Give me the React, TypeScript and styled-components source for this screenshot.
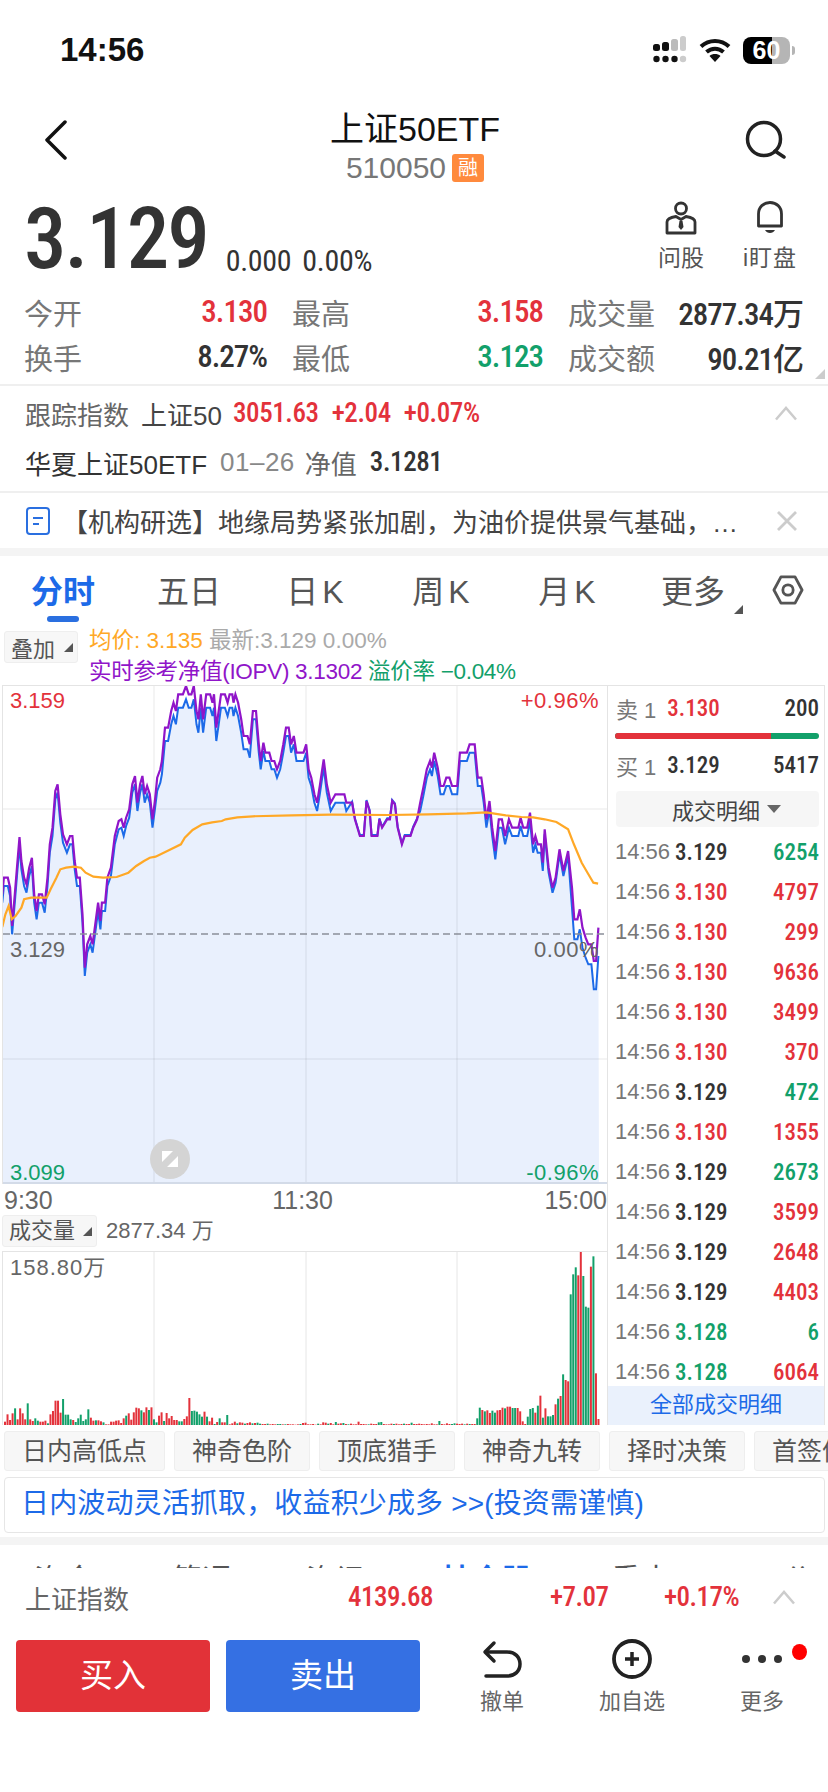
import React from "react";
import styled, { createGlobalStyle } from "styled-components";

const RED = "#e3323b";
const GREEN = "#12a06a";
const BLUE = "#1c6ae8";
const SANS = `"Liberation Sans", "Noto Sans CJK SC", sans-serif`;
const NARROW = `Roboto, "Noto Sans CJK SC", sans-serif`;

const GlobalStyle = createGlobalStyle`
    html, body {
        margin: 0;
        padding: 0;
        background: #fff;
    }
    body {
        font-family: ${SANS};
        color: #333;
    }
`;

const Page = styled.div`
    width: 828px;
    height: 1792px;
    overflow: hidden;
    position: relative;
    background: #fff;
`;

/* status bar */
const StatusBar = styled.div`
    height: 100px;
    display: flex;
    align-items: center;
    justify-content: space-between;
    padding: 0 38px 0 60px;
`;

const Clock = styled.span`
    font-size: 33px;
    font-weight: 700;
    color: #111;
`;

const StatusIcons = styled.div`
    display: flex;
    align-items: center;
    gap: 12px;
`;

const Battery = styled.div`
    width: 47px;
    height: 27px;
    border-radius: 8px;
    background: linear-gradient(90deg, #000 0 62%, #b5b5b5 62% 100%);
    color: #fff;
    font-size: 25px;
    font-weight: 700;
    line-height: 27px;
    text-align: center;
    position: relative;
    &::after {
        content: "";
        position: absolute;
        right: -5px;
        top: 9px;
        width: 3px;
        height: 9px;
        border-radius: 0 3px 3px 0;
        background: #b5b5b5;
    }
`;

/* nav */
const Nav = styled.div`
    height: 90px;
    display: grid;
    grid-template-columns: 1fr auto 1fr;
    padding: 0 42px 0 44px;
`;

const NavCenter = styled.div`
    display: flex;
    flex-direction: column;
    align-items: center;
`;

const Title = styled.div`
    font-size: 34px;
    line-height: 40px;
    margin-top: 9px;
    color: #111;
`;

const Code = styled.div`
    display: flex;
    align-items: center;
    gap: 6px;
    font-size: 30px;
    line-height: 34px;
    color: #777;
    margin-top: 2px;
`;

const Tag = styled.span`
    width: 32px;
    height: 28px;
    border-radius: 3px;
    background: #ff8a3d;
    color: #fff;
    font-size: 20px;
    line-height: 28px;
    text-align: center;
`;

const NavIcon = styled.svg<{ $end?: boolean }>`
    margin-top: 20px;
    justify-self: ${(p) => (p.$end ? "end" : "start")};
`;

/* quote */
const QuoteRow = styled.div`
    height: 97px;
    display: flex;
    justify-content: space-between;
    padding: 0 27px 0 24px;
`;

const QuoteMain = styled.div`
    display: flex;
    align-items: flex-end;
    height: 92px;
`;

const Price = styled.span`
    font-family: ${NARROW};
    font-stretch: 75%;
    font-size: 85px;
    font-weight: 500;
    line-height: 86px;
    letter-spacing: -2px;
    color: #333;
`;

const Change = styled.span`
    font-family: ${NARROW};
    font-stretch: 75%;
    font-size: 30px;
    line-height: 36px;
    letter-spacing: -0.3px;
    color: #333;
    margin: 0 0 3px 18px;
    & + & {
        margin-left: 11px;
    }
`;

const QuoteTools = styled.div`
    display: flex;
    gap: 27px;
    padding-top: 11px;
`;

const QuoteTool = styled.div<{ $spaced?: boolean }>`
    width: 62px;
    display: flex;
    flex-direction: column;
    align-items: center;
    gap: 9px;
    font-size: 23px;
    line-height: 28px;
    letter-spacing: ${(p) => (p.$spaced ? "1px" : "0")};
    color: #555;
    white-space: nowrap;
`;

const StatGrid = styled.div`
    display: grid;
    grid-template-columns: 243px 251px 235px;
    grid-auto-rows: 45px;
    column-gap: 25px;
    padding: 2px 22px 5px 24px;
    border-bottom: 2px solid #efefef;
    position: relative;
    &::after {
        content: "";
        position: absolute;
        right: 3px;
        bottom: 5px;
        border-style: solid;
        border-width: 0 0 10px 10px;
        border-color: transparent transparent #ccc transparent;
    }
`;

const Stat = styled.div`
    display: flex;
    justify-content: space-between;
    align-items: center;
`;

const StatLabel = styled.span`
    font-size: 29px;
    color: #777;
`;

const StatValue = styled.span<{ $color?: string }>`
    font-family: ${NARROW};
    font-stretch: 75%;
    font-size: 31px;
    font-weight: 500;
    letter-spacing: -1px;
    color: ${(p) => p.$color || "#333"};
    white-space: nowrap;
`;

/* tracked index */
const Tracking = styled.div`
    height: 107px;
    padding: 0 30px 0 25px;
    border-bottom: 2px solid #efefef;
    box-sizing: border-box;
    display: grid;
    grid-template-rows: 54px 44px;
    align-items: center;
`;

const TrackLine = styled.div`
    display: flex;
    align-items: center;
    font-size: 26px;
`;

const Muted = styled.span<{ $gap?: number; $color?: string }>`
    color: ${(p) => p.$color || "#666"};
    margin-right: ${(p) => p.$gap ?? 0}px;
    white-space: nowrap;
`;

const TrackDate = styled(Muted)`
    letter-spacing: 0.5px;
`;

const TrackNum = styled.span<{ $gap?: number; $color?: string }>`
    font-family: ${NARROW};
    font-stretch: 75%;
    font-size: 27px;
    font-weight: 500;
    letter-spacing: -0.4px;
    color: ${(p) => p.$color || "#333"};
    margin-right: ${(p) => p.$gap ?? 0}px;
`;

const Chevron = styled.svg`
    margin-left: auto;
`;

const IndexChevron = styled.svg`
    justify-self: start;
`;

const News = styled.div`
    height: 55px;
    display: flex;
    align-items: center;
    padding: 0 30px 0 26px;
`;

const NewsText = styled.div`
    flex: 1;
    margin: 0 30px 0 12px;
    font-size: 26px;
    color: #444;
    white-space: nowrap;
    overflow: hidden;
    text-overflow: ellipsis;
`;

const Band = styled.div`
    height: 8px;
    background: #f4f4f4;
`;

/* chart tabs */
const Tabs = styled.div`
    height: 66px;
    display: grid;
    grid-template-columns: repeat(6, 126px) 1fr;
    align-items: start;
`;

const Tab = styled.div<{ $active?: boolean; $wide?: boolean }>`
    position: relative;
    text-align: center;
    font-size: 32px;
    line-height: 44px;
    padding-top: 14px;
    padding-left: ${(p) => (p.$wide ? "4px" : "0")};
    white-space: nowrap;
    letter-spacing: ${(p) => (p.$wide ? "4px" : "0")};
    font-weight: ${(p) => (p.$active ? 700 : 400)};
    color: ${(p) => (p.$active ? BLUE : "#555")};
    ${(p) =>
        p.$active &&
        `&::after {
            content: "";
            position: absolute;
            left: 47px;
            top: 60px;
            width: 32px;
            height: 6px;
            border-radius: 3px;
            background: #2a6fe0;
        }`}
`;

const MoreTab = styled(Tab)`
    padding-left: 18px;
`;

const Corner = styled.i`
    display: inline-block;
    vertical-align: bottom;
    border-style: solid;
    border-width: 0 0 9px 9px;
    border-color: transparent transparent #555 transparent;
`;

const TabIcon = styled.div`
    display: flex;
    justify-content: center;
    padding: 19px 8px 0 0;
`;

const LegendRow = styled.div`
    height: 63px;
    display: flex;
    padding-left: 4px;
    box-sizing: border-box;
    padding-top: 9px;
`;

const SmallButton = styled.div<{ $width: number }>`
    width: ${(p) => p.$width}px;
    height: 32px;
    box-sizing: border-box;
    display: flex;
    align-items: center;
    justify-content: space-between;
    padding: 0 4px 0 6px;
    background: #f7f7f7;
    border: 1px solid #eee;
    border-radius: 3px;
    font-size: 22px;
    color: #555;
`;

const LegendText = styled.div`
    margin: -6px 0 0 11px;
    font-size: 22.5px;
    line-height: 31px;
    white-space: nowrap;
`;

const LegendTight = styled.div`
    letter-spacing: -0.3px;
`;

const LegendPart = styled.span<{ $color: string }>`
    color: ${(p) => p.$color};
`;

/* chart body */
const ChartArea = styled.div`
    display: flex;
    height: 740px;
    padding-left: 2px;
`;

const ChartColumn = styled.div`
    width: 605px;
    display: flex;
    flex-direction: column;
`;

const Plot = styled.div<{ $height: number }>`
    position: relative;
    height: ${(p) => p.$height}px;
    border-top: 1px solid #e4e4e4;
    border-left: 1px solid #e4e4e4;
    box-sizing: border-box;
    flex: none;
    svg {
        display: block;
    }
`;

const PlotLabel = styled.span<{ $top: number; $color: string; $right?: boolean }>`
    position: absolute;
    top: ${(p) => p.$top}px;
    ${(p) => (p.$right ? "right: 8px; letter-spacing: 0.5px;" : "left: 7px;")}
    font-size: 22px;
    line-height: 26px;
    color: ${(p) => p.$color};
`;

const VolumeMax = styled(PlotLabel)`
    letter-spacing: 1px;
`;

const TimeAxis = styled.div`
    height: 31px;
    display: flex;
    justify-content: space-between;
    padding: 0 0 0 2px;
    font-size: 25px;
    line-height: 32px;
    color: #666;
    span:nth-child(2) {
        margin-left: 8px;
    }
`;

const VolumeHeader = styled.div`
    height: 36px;
    display: flex;
    gap: 9px;
    font-size: 22px;
    line-height: 32px;
    color: #666;
`;

const SidePanel = styled.div`
    width: 218px;
    height: 740px;
    box-sizing: border-box;
    border: 1px solid #e4e4e4;
    border-bottom: none;
    display: flex;
    flex-direction: column;
    overflow: hidden;
`;

const BookRow = styled.div<{ $height: number }>`
    height: ${(p) => p.$height}px;
    flex: none;
    display: flex;
    align-items: center;
    padding: 0 5px 0 8px;
    font-size: 22px;
    color: #777;
`;

const BookPrice = styled.span<{ $color: string }>`
    font-family: ${NARROW};
    font-stretch: 75%;
    font-size: 23px;
    font-weight: 500;
    margin-left: 11px;
    color: ${(p) => p.$color};
`;

const BookVolume = styled.span`
    margin-left: auto;
    font-family: ${NARROW};
    font-stretch: 75%;
    font-size: 23px;
    font-weight: 500;
    color: #333;
`;

const DepthBar = styled.div`
    flex: none;
    height: 6px;
    margin: 3px 5px 0 7px;
    border-radius: 3px;
    overflow: hidden;
    display: flex;
    background: ${GREEN};
`;

const DepthFill = styled.div`
    height: 100%;
    background: ${RED};
`;

const DetailButton = styled.div`
    flex: none;
    height: 36px;
    margin: 0 5px 0 8px;
    padding-left: 18px;
    border-radius: 4px;
    background: #f6f6f6;
    display: flex;
    align-items: center;
    justify-content: center;
    gap: 7px;
    font-size: 22px;
    color: #444;
`;

const TradeList = styled.div`
    flex: 1;
    min-height: 0;
    overflow: hidden;
    margin-top: 5px;
`;

const TradeRow = styled.div`
    height: 40px;
    display: flex;
    align-items: center;
    padding: 0 5px 0 7px;
    font-size: 22px;
    color: #777;
`;

const TradePrice = styled.span<{ $color: string }>`
    font-family: ${NARROW};
    font-stretch: 75%;
    font-size: 23px;
    font-weight: 500;
    margin-left: 5px;
    color: ${(p) => p.$color};
`;

const TradeVolume = styled.span<{ $color: string }>`
    margin-left: auto;
    font-family: ${NARROW};
    font-stretch: 75%;
    font-size: 23px;
    font-weight: 500;
    color: ${(p) => p.$color};
`;

const AllTrades = styled.div`
    flex: none;
    height: 39px;
    background: #eaf1fc;
    color: ${BLUE};
    font-size: 22px;
    line-height: 38px;
    text-align: center;
`;

/* strategy chips */
const ChipRow = styled.div`
    display: flex;
    gap: 9px;
    padding: 6px 0 0 4px;
    overflow: hidden;
`;

const Chip = styled.div`
    flex: none;
    box-sizing: border-box;
    height: 40px;
    padding: 0 17px;
    background: #f7f7f7;
    border: 1px solid #eee;
    border-radius: 3px;
    font-size: 25px;
    line-height: 38px;
    color: #555;
    white-space: nowrap;
`;

const Banner = styled.div`
    box-sizing: border-box;
    height: 56px;
    margin: 6px 3px 4px 4px;
    padding-left: 16px;
    border: 1px solid #e6e6e6;
    border-radius: 4px;
    font-size: 28px;
    letter-spacing: 0.15px;
    line-height: 52px;
    color: ${BLUE};
    white-space: nowrap;
`;

const PeekTabs = styled.div`
    height: 23px;
    overflow: hidden;
    display: grid;
    grid-template-columns: 138px 134px 136px 169px 172px 1fr;
    padding-left: 34px;
    box-sizing: border-box;
    font-size: 30px;
    line-height: 70px;
    color: #555;
`;

const PeekTab = styled.span<{ $active?: boolean }>`
    color: ${(p) => (p.$active ? BLUE : "#555")};
    font-weight: ${(p) => (p.$active ? 700 : 400)};
`;

/* footer */
const IndexBar = styled.div`
    height: 72px;
    box-sizing: border-box;
    padding: 0 0 14px 25px;
    display: grid;
    grid-template-columns: 323px 202px 114px 108px 1fr;
    align-items: center;
    font-family: ${NARROW};
    font-stretch: 75%;
    font-size: 27px;
    font-weight: 500;
    letter-spacing: -0.5px;
    color: ${RED};
`;

const IndexName = styled.span`
    font-family: ${SANS};
    font-size: 26px;
    font-weight: 400;
    letter-spacing: 0;
    color: #666;
`;

const ActionBar = styled.div`
    display: flex;
    padding-left: 16px;
`;

const TradeButton = styled.div<{ $color: string }>`
    width: 194px;
    height: 72px;
    margin-right: 16px;
    border-radius: 4px;
    background: ${(p) => p.$color};
    color: #fff;
    font-size: 33px;
    line-height: 72px;
    text-align: center;
`;

const ActionIcons = styled.div`
    display: grid;
    grid-template-columns: repeat(3, 130px);
    margin-left: 1px;
`;

const ActionItem = styled.div`
    position: relative;
    display: flex;
    flex-direction: column;
    align-items: center;
    font-size: 22px;
    line-height: 28px;
    color: #666;
    gap: 10px;
`;

const Dot = styled.span`
    position: absolute;
    left: 95px;
    top: 4px;
    width: 15px;
    height: 16px;
    border-radius: 50%;
    background: #f00;
`;

// traced from the intraday line, x/y in a 2.57x / 3x grid
const IOPV_RAW = [
    6,640, 10,590, 20,590, 26,620, 31,735, 38,640, 45,540, 50,468, 55,540, 62,590, 68,610, 75,560, 82,530, 88,640,
    94,690, 100,640, 108,640, 115,670, 122,590, 128,490, 135,440, 142,330, 148,310, 155,400, 162,460, 172,490,
    180,465, 186,465, 192,540, 198,590, 205,590, 212,700, 218,860, 224,790, 232,765, 238,790, 246,720, 252,665,
    258,720, 262,665, 270,665, 276,590, 285,560, 295,465, 305,420, 312,415, 318,440, 324,410, 332,385, 340,310,
    347,285, 353,365, 360,310, 366,285, 372,340, 378,315, 385,340, 392,415, 398,360, 404,290, 412,265, 416,240,
    424,140, 432,140, 440,90, 446,65, 452,90, 458,40, 470,40, 478,15, 485,40, 492,40, 498,15, 505,90, 510,115,
    516,40, 522,115, 530,40, 540,40, 546,65, 550,40, 556,140, 562,90, 568,40, 578,40, 585,65, 590,40, 597,40,
    600,65, 605,40, 612,65, 620,115, 626,165, 636,165, 642,190, 650,90, 658,90, 665,190, 670,240, 677,185, 682,215,
    692,215, 698,240, 705,240, 712,265, 720,240, 728,190, 735,140, 742,140, 748,190, 755,165, 762,215, 780,215,
    787,190, 793,265, 800,290, 808,340, 815,365, 822,315, 832,235, 840,310, 850,365, 862,340, 885,340, 890,365,
    905,365, 912,415, 925,465, 935,465, 942,360, 950,390, 955,465, 970,465, 975,415, 982,440, 995,415, 1002,415,
    1008,360, 1015,370, 1022,440, 1033,490, 1040,465, 1055,465, 1062,440, 1072,415, 1080,365, 1088,320, 1097,265,
    1105,240, 1110,260, 1116,215, 1125,260, 1132,315, 1140,315, 1147,290, 1155,290, 1162,315, 1175,315, 1182,215,
    1200,215, 1207,190, 1220,190, 1228,290, 1237,290, 1243,340, 1250,415, 1258,360, 1265,440, 1273,510, 1282,415,
    1290,415, 1298,465, 1308,415, 1316,440, 1332,440, 1338,410, 1345,440, 1355,440, 1362,395, 1370,490, 1376,465,
    1382,490, 1390,490, 1395,545, 1400,445, 1410,560, 1420,620, 1428,590, 1438,505, 1448,570, 1460,510, 1470,620,
    1476,715, 1484,715, 1490,685, 1497,740, 1505,770, 1512,790, 1520,790, 1526,840, 1532,840, 1538,740,
];

const AVG_RAW = [
    6,738, 14,700, 22,675, 30,715, 40,705, 55,680, 62,655, 80,650, 100,650, 120,650, 130,625, 145,590, 155,565,
    170,560, 190,557, 208,560, 220,575, 240,587, 265,590, 300,588, 330,575, 350,555, 370,540, 385,530, 400,527,
    430,510, 465,490, 475,470, 495,447, 520,430, 545,424, 570,420, 580,415, 610,409, 650,406, 750,403, 850,401,
    1000,402, 1100,400, 1200,397, 1250,394, 1300,403, 1340,408, 1370,409, 1400,415, 1430,423, 1460,445, 1475,490,
    1495,545, 1510,575, 1525,605, 1537,608,
];

const toPoints = (raw: number[], shift: (x: number) => number = () => 0) => {
    const out: string[] = [];
    for (let i = 0; i < raw.length; i += 2) {
        const x = raw[i] / 2.57 - 3;
        const y = (raw[i + 1] + shift(raw[i])) / 3 - 5;
        out.push(`${x.toFixed(1)},${y.toFixed(1)}`);
    }
    return out.join(" ");
};

// the price line sits a little under the IOPV line
const priceGap = (x: number) => {
    if (x < 400) return 25;
    if (x < 650) return 40;
    if (x < 905) return 25;
    if (x < 1075) return -3;
    if (x < 1400) return 25;
    if (x < 1470) return 15;
    if (x < 1526) return 60;
    return 85;
};

const pricePoints = toPoints(IOPV_RAW, priceGap);

// negative = green bar, values are 3x real height
const VOLUME = [
    10,32,15,35,-50,17,50,35,17,-65,17,12,-20,-13,10,10,13,-5,32,42,73,73,37,-78,-31,-31,-17,15,-9,-20,-31,-12,-17,-47,22,13,
    -14,14,11,-8,2,2,10,10,13,14,6,20,-28,35,16,38,52,50,-44,38,53,-45,53,-17,-8,28,38,-12,36,20,27,15,15,-11,-11,18,26,81,
    -42,-43,-40,-32,-25,40,-25,11,22,-3,9,-20,8,8,-30,2,5,10,-5,8,
    7,-4,6,8,-5,6,-7,-4,3,3,-4,2,3,2,-3,-3,2,-2,3,2,2,1,2,-3,6,7,2,2,3,1,-4,2,
    8,7,-4,6,2,-9,4,5,-6,3,-2,4,2,2,10,3,3,2,-2,4,3,3,-8,-9,3,2,2,4,-3,4,2,3,-4,3,3,-7,3,3,4,3,2,3,2,5,2,2,-12,3,2,5,
    3,-3,-5,4,3,4,-2,4,
    -3,3,3,-20,-52,45,-41,44,36,-43,-37,44,45,52,-50,55,55,-51,-51,51,41,11,3,-25,-48,-51,37,-58,88,-22,50,-26,-26,-30,62,
    -79,87,-152,135,131,-392,-452,-473,449,521,-447,-355,-352,475,-506,155,18,
];

const BAR_STEP = 596 / VOLUME.length;

const GRID_X = [151, 303, 454];

const trades: [string, string][] = [
    ["3.129", "6254"],
    ["3.130", "4797"],
    ["3.130", "299"],
    ["3.130", "9636"],
    ["3.130", "3499"],
    ["3.130", "370"],
    ["3.129", "472"],
    ["3.130", "1355"],
    ["3.129", "2673"],
    ["3.129", "3599"],
    ["3.129", "2648"],
    ["3.129", "4403"],
    ["3.128", "6"],
    ["3.128", "6064"],
];

const tradeColors: Record<number, string> = {
    0: GREEN,
    6: GREEN,
    8: GREEN,
    12: GREEN,
};

const priceColor = (price: string) => {
    if (price === "3.129") return "#333";
    return price === "3.130" ? RED : GREEN;
};

const chips = ["日内高低点", "神奇色阶", "顶底猎手", "神奇九转", "择时决策", "首签信号"];

function SignalIcon() {
    return (
        <svg width="34" height="28" viewBox="0 0 34 28">
            <rect x="0" y="8" width="7" height="7" rx="2.5" fill="#111" />
            <rect x="9" y="6" width="7" height="9" rx="2.5" fill="#111" />
            <rect x="18" y="3" width="7" height="12" rx="2.5" fill="#bbb" />
            <rect x="27" y="0" width="6" height="15" rx="2.5" fill="#ccc" />
            <circle cx="3.5" cy="23" r="3.2" fill="#111" />
            <circle cx="12.5" cy="23" r="3.2" fill="#111" />
            <circle cx="21.5" cy="23" r="3.2" fill="#111" />
            <circle cx="30" cy="23" r="3.2" fill="#ccc" />
        </svg>
    );
}

function WifiIcon() {
    return (
        <svg width="32" height="24" viewBox="0 0 32 24" fill="none" stroke="#111" strokeWidth="4">
            <path d="M2 8.5C10 1 22 1 30 8.5" />
            <path d="M7.5 14C12.5 9.5 19.5 9.5 24.5 14" />
            <path d="M16 24l-5.5-6c3-2.6 8-2.6 11 0z" fill="#111" stroke="none" />
        </svg>
    );
}

const chevronPath = "M2 14.5L12 3L22 14.5";

function App() {
    return (
        <Page>
            <GlobalStyle />
            <StatusBar>
                <Clock>14:56</Clock>
                <StatusIcons>
                    <SignalIcon />
                    <WifiIcon />
                    <Battery>60</Battery>
                </StatusIcons>
            </StatusBar>

            <Nav>
                <NavIcon width="24" height="40" viewBox="0 0 24 40" fill="none" stroke="#111" strokeWidth="3.5">
                    <path d="M21 2L3 20L21 38" strokeLinecap="round" strokeLinejoin="round" />
                </NavIcon>
                <NavCenter>
                    <Title>上证50ETF</Title>
                    <Code>
                        510050
                        <Tag>融</Tag>
                    </Code>
                </NavCenter>
                <NavIcon $end width="42" height="40" viewBox="0 0 42 40" fill="none" stroke="#222" strokeWidth="3.5">
                    <circle cx="20" cy="19" r="16.5" />
                    <path d="M31 31l9 6" strokeLinecap="round" />
                </NavIcon>
            </Nav>

            <QuoteRow>
                <QuoteMain>
                    <Price>3.129</Price>
                    <Change>0.000</Change>
                    <Change>0.00%</Change>
                </QuoteMain>
                <QuoteTools>
                    <QuoteTool>
                        <svg width="32" height="34" viewBox="0 0 32 34" fill="none" stroke="#333" strokeWidth="2.8">
                            <circle cx="16" cy="7.5" r="5.5" />
                            <path d="M2 32V21c0-3 3-4.5 9-5.5l5 3 5-3c6 1 9 2.5 9 5.5v11z" strokeLinejoin="round" />
                            <path d="M14.5 20h3l1 6-2.5 3-2.5-3z" fill="#333" stroke="none" />
                        </svg>
                        问股
                    </QuoteTool>
                    <QuoteTool $spaced>
                        <svg width="28" height="34" viewBox="0 0 28 34" fill="none" stroke="#333" strokeWidth="2.8">
                            <path d="M2.5 25V13C2.5 6 7.5 1.5 14 1.5S25.5 6 25.5 13v12z" strokeLinejoin="round" />
                            <path d="M9 29h10c-1 2-3 3-5 3s-4-1-5-3z" fill="#333" stroke="none" />
                        </svg>
                        i盯盘
                    </QuoteTool>
                </QuoteTools>
            </QuoteRow>

            <StatGrid>
                <Stat>
                    <StatLabel>今开</StatLabel>
                    <StatValue $color={RED}>3.130</StatValue>
                </Stat>
                <Stat>
                    <StatLabel>最高</StatLabel>
                    <StatValue $color={RED}>3.158</StatValue>
                </Stat>
                <Stat>
                    <StatLabel>成交量</StatLabel>
                    <StatValue>2877.34万</StatValue>
                </Stat>
                <Stat>
                    <StatLabel>换手</StatLabel>
                    <StatValue>8.27%</StatValue>
                </Stat>
                <Stat>
                    <StatLabel>最低</StatLabel>
                    <StatValue $color={GREEN}>3.123</StatValue>
                </Stat>
                <Stat>
                    <StatLabel>成交额</StatLabel>
                    <StatValue>90.21亿</StatValue>
                </Stat>
            </StatGrid>

            <Tracking>
                <TrackLine>
                    <Muted $gap={12}>跟踪指数</Muted>
                    <Muted $gap={11} $color="#444">
                        上证50
                    </Muted>
                    <TrackNum $gap={13} $color={RED}>
                        3051.63
                    </TrackNum>
                    <TrackNum $gap={13} $color={RED}>
                        +2.04
                    </TrackNum>
                    <TrackNum $color={RED}>+0.07%</TrackNum>
                    <Chevron width="24" height="16" viewBox="0 0 24 16" fill="none" stroke="#ccc" strokeWidth="2.5">
                        <path d={chevronPath} />
                    </Chevron>
                </TrackLine>
                <TrackLine>
                    <Muted $gap={13} $color="#333">
                        华夏上证50ETF
                    </Muted>
                    <TrackDate $gap={10} $color="#888">
                        01–26
                    </TrackDate>
                    <Muted $gap={13}>净值</Muted>
                    <TrackNum>3.1281</TrackNum>
                </TrackLine>
            </Tracking>

            <News>
                <svg width="24" height="28" viewBox="0 0 24 28" fill="none" stroke="#2a6fe0" strokeWidth="2">
                    <rect x="1" y="1" width="22" height="26" rx="3" />
                    <path d="M7 11h10M7 17h6" />
                </svg>
                <NewsText>【机构研选】地缘局势紧张加剧，为油价提供景气基础，…</NewsText>
                <svg width="22" height="22" viewBox="0 0 22 22" fill="none" stroke="#ccc" strokeWidth="2.8">
                    <path d="M2 2l18 18M20 2L2 20" />
                </svg>
            </News>
            <Band />

            <Tabs>
                <Tab $active>分时</Tab>
                <Tab>五日</Tab>
                <Tab $wide>日K</Tab>
                <Tab $wide>周K</Tab>
                <Tab $wide>月K</Tab>
                <MoreTab>
                    更多 <Corner />
                </MoreTab>
                <TabIcon>
                    <svg width="34" height="30" viewBox="0 0 34 32" fill="none" stroke="#555" strokeWidth="3">
                        <path d="M9.5 2h15L32 16l-7.5 14h-15L2 16z" strokeLinejoin="round" />
                        <circle cx="17" cy="16" r="5.5" />
                    </svg>
                </TabIcon>
            </Tabs>

            <LegendRow>
                <SmallButton $width={74}>
                    叠加
                    <Corner />
                </SmallButton>
                <LegendText>
                    <div>
                        <LegendPart $color="#ffa826">均价: 3.135 </LegendPart>
                        <LegendPart $color="#aaa">最新:3.129 0.00%</LegendPart>
                    </div>
                    <LegendTight>
                        <LegendPart $color="#9015c9">实时参考净值(IOPV) 3.1302 </LegendPart>
                        <LegendPart $color={GREEN}>溢价率 −0.04%</LegendPart>
                    </LegendTight>
                </LegendText>
            </LegendRow>

            <ChartArea>
                <ChartColumn>
                    <Plot $height={499}>
                        <svg width="604" height="498" viewBox="0 0 604 498">
                            <polygon points={`0,498 ${pricePoints} 596,498`} fill="#e9f0fd" />
                            {GRID_X.map((x) => (
                                <line key={x} x1={x} x2={x} y1="0" y2="498" stroke="#000" strokeOpacity="0.09" />
                            ))}
                            <line x1="0" x2="604" y1="123" y2="123" stroke="#000" strokeOpacity="0.09" />
                            <line x1="0" x2="604" y1="373" y2="373" stroke="#000" strokeOpacity="0.09" />
                            <line x1="0" x2="604" y1="497" y2="497" stroke="#d3dbe8" strokeWidth="2" />
                            <polyline points={pricePoints} fill="none" stroke={BLUE} strokeWidth="2" />
                            <polyline points={toPoints(IOPV_RAW)} fill="none" stroke="#9015c9" strokeWidth="2.2" />
                            <polyline points={toPoints(AVG_RAW)} fill="none" stroke="#ffa826" strokeWidth="2.2" />
                            <line x1="0" x2="604" y1="248" y2="248" stroke="#8b8f99" strokeWidth="1.5" strokeDasharray="7 4" />
                            <circle cx="167" cy="473" r="20" fill="#d4d4d4" />
                            <path d="M159 465h11l-11 11zM175 481h-11l11-11z" fill="#fff" />
                        </svg>
                        <PlotLabel $top={2} $color={RED}>
                            3.159
                        </PlotLabel>
                        <PlotLabel $top={2} $color={RED} $right>
                            +0.96%
                        </PlotLabel>
                        <PlotLabel $top={251} $color="#666">
                            3.129
                        </PlotLabel>
                        <PlotLabel $top={251} $color="#666" $right>
                            0.00%
                        </PlotLabel>
                        <PlotLabel $top={474} $color={GREEN}>
                            3.099
                        </PlotLabel>
                        <PlotLabel $top={474} $color={GREEN} $right>
                            -0.96%
                        </PlotLabel>
                    </Plot>
                    <TimeAxis>
                        <span>9:30</span>
                        <span>11:30</span>
                        <span>15:00</span>
                    </TimeAxis>
                    <VolumeHeader>
                        <SmallButton $width={95}>
                            成交量
                            <Corner />
                        </SmallButton>
                        <span>2877.34 万</span>
                    </VolumeHeader>
                    <Plot $height={174}>
                        <svg width="604" height="173" viewBox="0 0 604 173">
                            {GRID_X.map((x) => (
                                <line key={x} x1={x} x2={x} y1="0" y2="173" stroke="#e6e6e6" />
                            ))}
                            {VOLUME.map((v, i) => {
                                const h = Math.abs(v) / 3;
                                return (
                                    <rect
                                        key={i}
                                        x={2 + i * BAR_STEP - 1}
                                        y={173 - h}
                                        width="2"
                                        height={h}
                                        fill={v < 0 ? GREEN : RED}
                                    />
                                );
                            })}
                        </svg>
                        <VolumeMax $top={3} $color="#666">
                            158.80万
                        </VolumeMax>
                    </Plot>
                </ChartColumn>

                <SidePanel>
                    <BookRow $height={44}>
                        卖 1<BookPrice $color={RED}>3.130</BookPrice>
                        <BookVolume>200</BookVolume>
                    </BookRow>
                    <DepthBar>
                        <DepthFill style={{ width: `${(157 / 205) * 100}%` }} />
                    </DepthBar>
                    <BookRow $height={52}>
                        买 1<BookPrice $color="#333">3.129</BookPrice>
                        <BookVolume>5417</BookVolume>
                    </BookRow>
                    <DetailButton>
                        成交明细
                        <svg width="14" height="8" viewBox="0 0 14 8">
                            <path d="M0 0h14L7 8z" fill="#666" />
                        </svg>
                    </DetailButton>
                    <TradeList>
                        {trades.map(([price, volume], i) => (
                            <TradeRow key={i}>
                                14:56
                                <TradePrice $color={priceColor(price)}>{price}</TradePrice>
                                <TradeVolume $color={tradeColors[i] || RED}>{volume}</TradeVolume>
                            </TradeRow>
                        ))}
                    </TradeList>
                    <AllTrades>全部成交明细</AllTrades>
                </SidePanel>
            </ChartArea>

            <ChipRow>
                {chips.map((c) => (
                    <Chip key={c}>{c}</Chip>
                ))}
            </ChipRow>
            <Banner>日内波动灵活抓取，收益积少成多 &gt;&gt;(投资需谨慎)</Banner>
            <Band />
            <PeekTabs>
                <PeekTab>资金</PeekTab>
                <PeekTab>简况</PeekTab>
                <PeekTab>资讯</PeekTab>
                <PeekTab $active>持仓股</PeekTab>
                <PeekTab>重大</PeekTab>
                <PeekTab>公告</PeekTab>
            </PeekTabs>

            <IndexBar>
                <IndexName>上证指数</IndexName>
                <span>4139.68</span>
                <span>+7.07</span>
                <span>+0.17%</span>
                <IndexChevron width="24" height="16" viewBox="0 0 24 16" fill="none" stroke="#ccc" strokeWidth="2.5">
                    <path d={chevronPath} />
                </IndexChevron>
            </IndexBar>

            <ActionBar>
                <TradeButton $color="#e23238">买入</TradeButton>
                <TradeButton $color="#3570e3">卖出</TradeButton>
                <ActionIcons>
                    <ActionItem>
                        <svg width="42" height="38" viewBox="0 0 42 38" fill="none" stroke="#222" strokeWidth="3.5">
                            <path d="M5 36h21c8 0 13-5 13-12s-5-12-13-12H5" strokeLinecap="round" />
                            <path d="M13 3L4 12l9 9" strokeLinecap="round" strokeLinejoin="round" />
                        </svg>
                        撤单
                    </ActionItem>
                    <ActionItem>
                        <svg width="42" height="38" viewBox="0 2 42 38" fill="none" stroke="#222" strokeWidth="3.8" overflow="visible">
                            <circle cx="21" cy="21" r="18" />
                            <path d="M21 14v14M14 21h14" strokeWidth="3.5" />
                        </svg>
                        加自选
                    </ActionItem>
                    <ActionItem>
                        <svg width="42" height="38" viewBox="0 0 42 38" fill="#333">
                            <circle cx="5" cy="19" r="4" />
                            <circle cx="21" cy="19" r="4" />
                            <circle cx="37" cy="19" r="4" />
                        </svg>
                        更多
                        <Dot />
                    </ActionItem>
                </ActionIcons>
            </ActionBar>
        </Page>
    );
}

export default App;
